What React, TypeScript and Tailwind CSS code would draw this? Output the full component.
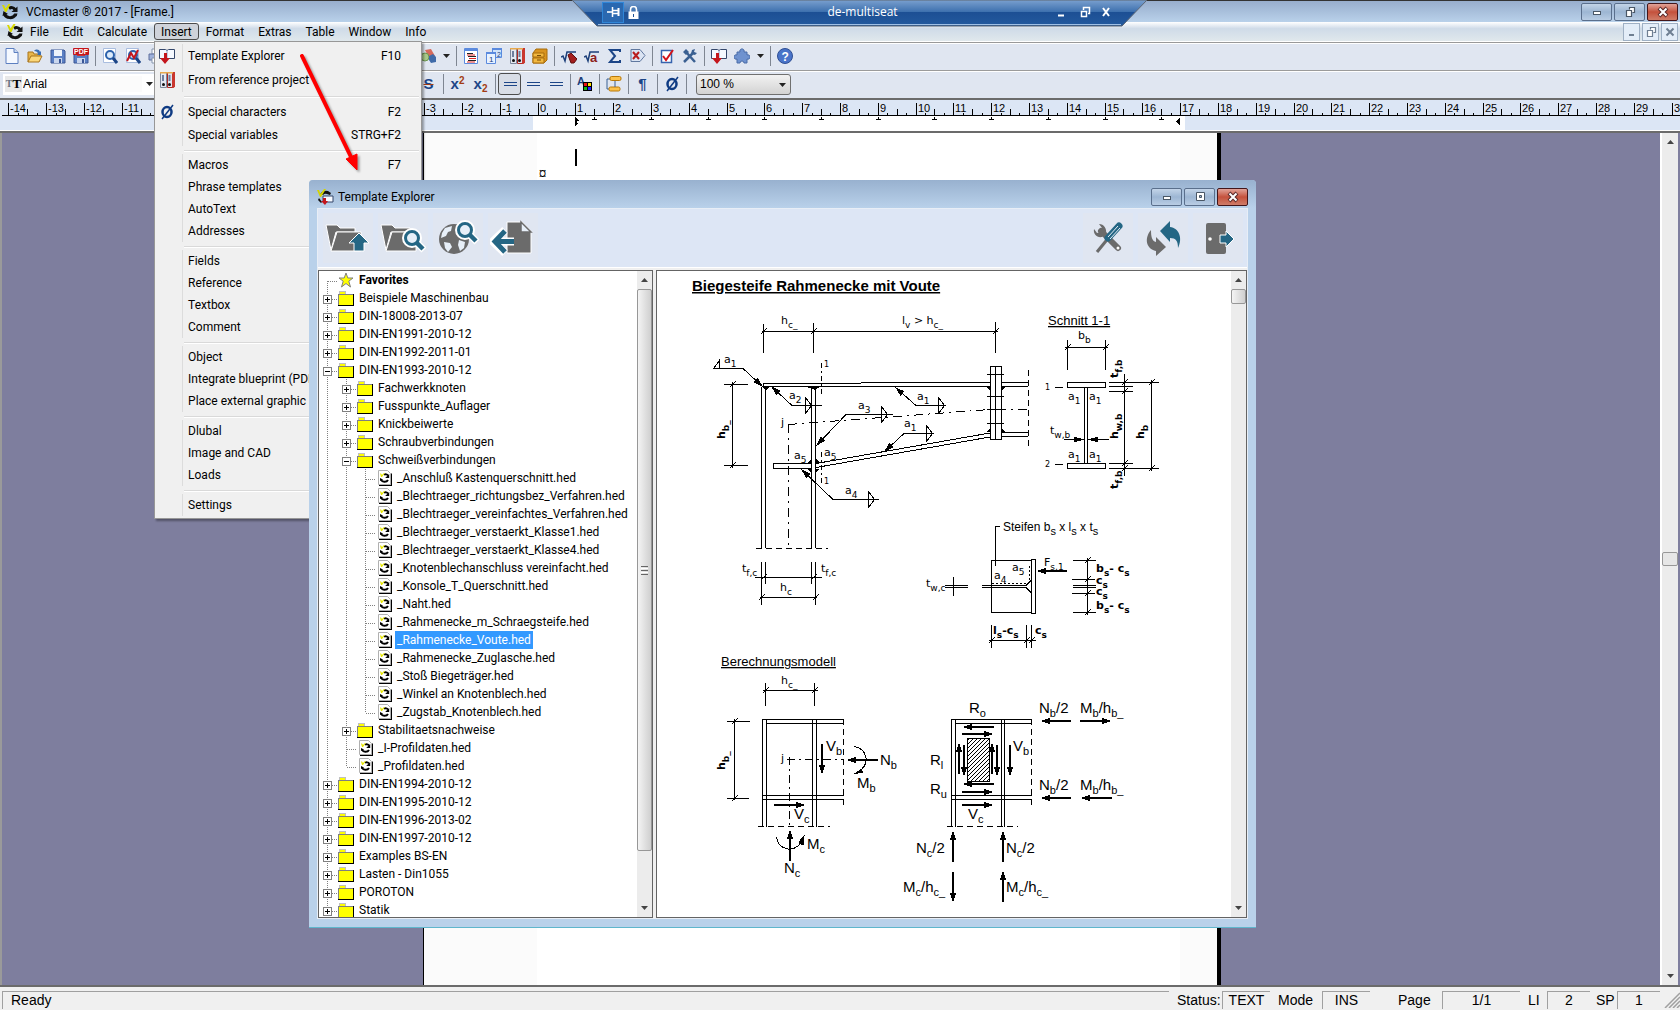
import React from 'react';

interface MenuEntry {
  label: string;
  keys?: string;
  icon?: React.ReactNode;
}

interface TreeRow {
  level: number;
  label: string;
  kind: 'star' | 'folder' | 'file';
  open?: boolean;
  last?: boolean;
  selected?: boolean;
}

/* ---------- small icons ---------- */

const Logo = () => (
  <svg width="16" height="16" viewBox="0 0 16 16" fill="none">
    <path d="M7 4.5c2-1.500 4.500-1 6 1" stroke="#111" strokeWidth="3" />
    <path d="M15.500 2.500v5.500h-6z" fill="#111" />
    <path d="M2.500 10c1.500 4.500 8.500 5 11 .5" stroke="#111" strokeWidth="3" />
    <path d="M.5 12l1-5 4.500 3zM12 9.500h3.500l-1 3z" fill="#111" />
    <path d="M0 1h2l1.500 3.500L6.500 0h2L4.500 8H3z" fill="#d8d800" />
  </svg>
);

const Glyph = ({ children }: { children: React.ReactNode }) => (
  <svg width="16" height="16" viewBox="0 0 16 16" fill="none">
    {children}
  </svg>
);

const NewIcon = () => (
  <Glyph>
    <path d="M2 .5h8l4 4v11H2z" fill="#f4f8ff" stroke="#5c7fc0" />
    <path d="M10 .5v4h4" fill="#c7d8f3" stroke="#5c7fc0" />
  </Glyph>
);

const OpenIcon = () => (
  <Glyph>
    <path d="M1 14V4h5l1 2h6v2" fill="#e8b64a" stroke="#a8741c" />
    <path d="M1 14l3-6h11l-3 6z" fill="#fbd77a" stroke="#a8741c" />
    <path d="M7 3c2-2 5-2 6 1l1-1v4h-4l1-1c0-2-2-3-4-3z" fill="#3b6fb5" />
  </Glyph>
);

const SaveIcon = ({ pdf }: { pdf?: boolean }) => (
  <Glyph>
    <path d="M1 2h13l1 1v12H1z" fill="#5a7fc4" stroke="#3a5696" />
    <path d="M4 2h8v6H4z" fill={pdf ? '#c33' : '#eef3fb'} />
    <path d="M4 10h8v5H4z" fill="#c9d6ee" />
    <path d="M9 11h2v4H9z" fill="#3a5696" />
    {pdf && <rect x="0" y="0" width="16" height="7" rx="1" fill="#c4161c" />}
    {pdf && (
      <text x="1" y="6" fontSize="7" fontWeight="bold" fill="#fff" fontFamily="Liberation Sans">
        PDF
      </text>
    )}
  </Glyph>
);

const PreviewIcon = ({ strike }: { strike?: boolean }) => (
  <Glyph>
    <path d="M1.5 .5h12v14h-12z" fill="#fff" stroke="#a9bddf" />
    <circle cx="8" cy="7" r="4" fill="#dcebfb" stroke="#2c62ac" strokeWidth="2" />
    <path d="M11 10l4 5" stroke="#1c4587" strokeWidth="3" />
    {strike && <path d="M2 13l4-8 3 5 4-8" stroke="#c4161c" strokeWidth="2" />}
  </Glyph>
);

const PrintIcon = () => (
  <Glyph>
    <path d="M4 1h8v5H4z" fill="#fff" stroke="#8796ad" />
    <path d="M1 6h14v6H1z" fill="#9fb2dc" stroke="#5f6f9c" />
    <path d="M4 10h8v5H4z" fill="#fff" stroke="#8796ad" />
  </Glyph>
);

const ShapesIcon = () => (
  <Glyph>
    <path d="M5 2l6-1 4 7-6 2z" fill="#d66a5c" />
    <circle cx="5" cy="9" r="4" fill="#a9c98a" stroke="#6d9650" />
    <path d="M9 8l4-2 3 3v5l-5 1-2-3z" fill="#3e6aa8" />
  </Glyph>
);

const ListIcon = () => (
  <Glyph>
    <path d="M1.5 .5h13v15h-13z" fill="#fff" stroke="#5b8ade" />
    <path d="M1 1h14v2H1z" fill="#5b8ade" />
    <path d="M4 5.5h6M5 8.5h8M5 12.5h8" stroke="#222" />
    <path d="M4 7h8M6 10.5h7M4 14h8" stroke="#d22" />
  </Glyph>
);

const PagesIcon = () => (
  <Glyph>
    <path d="M6.5 .5h9v9h-9z" fill="#cfe3fb" stroke="#5b8ade" />
    <path d="M.5 4.5h9v11h-9z" fill="#e8f2ff" stroke="#5b8ade" />
    <path d="M0 4h10v2H0zM6 0h10v2H6z" fill="#5b8ade" />
    <text x="3" y="14" fontSize="8" fill="#1c3f7a" fontFamily="Liberation Sans">1</text>
    <text x="11" y="9" fontSize="7" fill="#1c3f7a" fontFamily="Liberation Sans">2</text>
  </Glyph>
);

const BindersIcon = () => (
  <Glyph>
    <path d="M1.5 .5h6v15h-6z" fill="#e4e9f3" stroke="#7d889c" />
    <path d="M8.5 .5h6v15h-6z" fill="#dfe4ee" stroke="#b02a22" />
    <path d="M13 0h3v15l-3 1z" fill="#c9372e" />
    <path d="M1 0h13v1.5H1z" fill="#e8a94c" />
    <path d="M3 3h2v6H3zM9.500 3h2v6h-2z" fill="#6f7f9e" />
    <circle cx="4.5" cy="12.5" r="1.500" fill="#111" />
    <circle cx="10.5" cy="12.5" r="1.500" fill="#111" />
  </Glyph>
);

const BoxIcon = () => (
  <Glyph>
    <path d="M4 1h11v11l-3 3H1V5z" fill="#d99420" stroke="#a86d0c" />
    <path d="M1 5h11v4H1zM1 10h11v5H1z" fill="#f2b840" stroke="#a86d0c" />
    <path d="M5 7.5h4M5 12h4" stroke="#7a4d05" />
  </Glyph>
);

const RootIcon = ({ letter }: { letter?: boolean }) => (
  <Glyph>
    <path d="M0 9l2-1 2 5 2-9h9" stroke="#1c3f7a" strokeWidth="1.5" />
    {letter ? (
      <text x="6" y="14" fontSize="13" fontWeight="bold" fill="#8c1d1d" fontFamily="Liberation Sans">a</text>
    ) : (
      <path d="M7 7l3-2 6 6-3 4h-3z" fill="#a31e1e" stroke="#5f0e0e" />
    )}
  </Glyph>
);

const SigmaIcon = () => (
  <Glyph>
    <path d="M13 4V2H3l5 6-5 6h10v-2" stroke="#1c4587" strokeWidth="2" />
  </Glyph>
);

const DeleteBlockIcon = () => (
  <Glyph>
    <path d="M1 1.500h9l5 6-5 6H1z" fill="#dbe4f3" stroke="#60789f" />
    <path d="M3 4l6 7M9 4l-6 7" stroke="#b91c1c" strokeWidth="2" />
  </Glyph>
);

const CheckIcon = () => (
  <Glyph>
    <path d="M2.5 2.5h10v12h-10z" fill="#fff" stroke="#3763ae" strokeWidth="1.5" />
    <path d="M4 8l3 4 7-10" stroke="#d3121a" strokeWidth="2" />
  </Glyph>
);

const WrenchIcon = () => (
  <Glyph>
    <path d="M2 14L12 4M4 4l9 10" stroke="#3b6092" strokeWidth="2.5" />
    <path d="M1 4l3-3 3 3-3 3zM10 2l3-1-1 3 3 1-2 2-4-1z" fill="#3b6092" />
  </Glyph>
);

const BookArrowIcon = () => (
  <Glyph>
    <path d="M.5 1.5h6l1.5 1 1.5-1h6v9H.5z" fill="#f5f9ff" stroke="#34476b" />
    <path d="M8 2v8" stroke="#8ca0c4" />
    <path d="M5 5h3v5h3l-5 6-5-6h4z" fill="#c4161c" />
  </Glyph>
);

const PuzzleIcon = () => (
  <Glyph>
    <path d="M6 4a2.200 2.200 0 1 1 4 0h3v3a2.200 2.200 0 1 1 0 4v4h-3a2 2 0 1 0-4 0H3v-4a2.200 2.200 0 1 1 0-4V4z" fill="#6f92cf" stroke="#4a6ca8" />
  </Glyph>
);

const HelpIcon = () => (
  <Glyph>
    <circle cx="8" cy="8" r="7.5" fill="#4a74c9" stroke="#2f4f94" />
    <text x="4.5" y="12.5" fontSize="12" fontWeight="bold" fill="#fff" fontFamily="Liberation Sans">?</text>
  </Glyph>
);

const PaletteIcon = () => (
  <Glyph>
    <text x="0" y="9" fontSize="11" fontWeight="bold" fill="#1c3f7a" fontFamily="Liberation Sans">A</text>
    <path d="M6 6h9v9H6z" fill="#000" />
    <path d="M7 7h3v3H7z" fill="#e11" />
    <path d="M11 7h3v3h-3z" fill="#fd0" />
    <path d="M7 11h3v3H7z" fill="#1b1" />
    <path d="M11 11h3v3h-3z" fill="#22f" />
  </Glyph>
);

const BreakIcon = () => (
  <Glyph>
    <path d="M4 3H1v10h3" stroke="#3b6092" />
    <rect x="4" y=".5" width="11" height="4" rx="1.5" fill="#fbc14a" stroke="#b97908" />
    <rect x="3" y="11" width="11" height="4" rx="1.5" fill="#fbc14a" stroke="#b97908" />
    <path d="M9 5v6" stroke="#3b6092" />
  </Glyph>
);

const OIcon = () => (
  <Glyph>
    <ellipse cx="8" cy="8" rx="4.5" ry="5" stroke="#0f3b83" strokeWidth="2.5" />
    <path d="M3 15L14 1" stroke="#0f3b83" strokeWidth="1.5" />
  </Glyph>
);

const LinesIcon = () => (
  <Glyph>
    <path d="M1.5 6.5h13M1.5 9.5h13" stroke="#1c4587" shapeRendering="crispEdges" />
  </Glyph>
);

/* ---------- data ---------- */

const menuGroups: MenuEntry[][] = [
  [
    { label: 'Template Explorer', keys: 'F10', icon: <BookArrowIcon /> },
    { label: 'From reference project', icon: <BindersIcon /> },
  ],
  [
    { label: 'Special characters', keys: 'F2', icon: <OIcon /> },
    { label: 'Special variables', keys: 'STRG+F2' },
  ],
  [
    { label: 'Macros', keys: 'F7' },
    { label: 'Phrase templates' },
    { label: 'AutoText' },
    { label: 'Addresses' },
  ],
  [{ label: 'Fields' }, { label: 'Reference' }, { label: 'Textbox' }, { label: 'Comment' }],
  [{ label: 'Object' }, { label: 'Integrate blueprint (PDF)' }, { label: 'Place external graphic' }],
  [{ label: 'Dlubal' }, { label: 'Image and CAD' }, { label: 'Loads' }],
  [{ label: 'Settings' }],
];

const files = [
  '_Anschluß Kastenquerschnitt.hed',
  '_Blechtraeger_richtungsbez_Verfahren.hed',
  '_Blechtraeger_vereinfachtes_Verfahren.hed',
  '_Blechtraeger_verstaerkt_Klasse1.hed',
  '_Blechtraeger_verstaerkt_Klasse4.hed',
  '_Knotenblechanschluss vereinfacht.hed',
  '_Konsole_T_Querschnitt.hed',
  '_Naht.hed',
  '_Rahmenecke_m_Schraegsteife.hed',
  '_Rahmenecke_Voute.hed',
  '_Rahmenecke_Zuglasche.hed',
  '_Stoß Biegeträger.hed',
  '_Winkel an Knotenblech.hed',
  '_Zugstab_Knotenblech.hed',
];

const folder = (level: number, label: string, open = false): TreeRow => ({ level, label, kind: 'folder', open });

const treeRows: TreeRow[] = [
  { level: 0, label: 'Favorites', kind: 'star' },
  folder(0, 'Beispiele Maschinenbau'),
  folder(0, 'DIN-18008-2013-07'),
  folder(0, 'DIN-EN1991-2010-12'),
  folder(0, 'DIN-EN1992-2011-01'),
  folder(0, 'DIN-EN1993-2010-12', true),
  folder(1, 'Fachwerkknoten'),
  folder(1, 'Fusspunkte_Auflager'),
  folder(1, 'Knickbeiwerte'),
  folder(1, 'Schraubverbindungen'),
  folder(1, 'Schweißverbindungen', true),
  ...files.map((label, i): TreeRow => ({
    level: 2,
    label,
    kind: 'file',
    last: i === files.length - 1,
    selected: label === '_Rahmenecke_Voute.hed',
  })),
  folder(1, 'Stabilitaetsnachweise'),
  { level: 1, label: '_I-Profildaten.hed', kind: 'file' },
  { level: 1, label: '_Profildaten.hed', kind: 'file', last: true },
  folder(0, 'DIN-EN1994-2010-12'),
  folder(0, 'DIN-EN1995-2010-12'),
  folder(0, 'DIN-EN1996-2013-02'),
  folder(0, 'DIN-EN1997-2010-12'),
  folder(0, 'Examples BS-EN'),
  folder(0, 'Lasten - Din1055'),
  folder(0, 'POROTON'),
  folder(0, 'Statik'),
];

/* ---------- window chrome ---------- */

const WinButton = ({ kind, small }: { kind: 'min' | 'max' | 'restore' | 'close'; small?: boolean }) => {
  const close = kind === 'close' && !small;
  const look = small
    ? 'h-[18px] w-[17px] border-[#9fb0c4] bg-[#e3edf8]'
    : close
      ? 'h-[18px] w-[31px] rounded-[2px] border-[#43161a] bg-linear-to-b from-[#e0a298] via-[#c4513c] to-[#cf7c68]'
      : 'h-[18px] w-[31px] rounded-[2px] border-[#5a6f8c] bg-linear-to-b from-[#c3d4e8] via-[#9db6d3] to-[#b9cde4]';
  const stroke = small ? '#6f7f92' : '#4a5766';
  return (
    <button type="button" aria-label={kind} className={`flex items-center justify-center border ${look}`}>
      <svg width="12" height="12" viewBox="0 0 12 12" fill="none" stroke={stroke}>
        {kind === 'min' && !small && <rect x="2.5" y="5.5" width="7" height="3" fill="#fff" />}
        {kind === 'min' && small && <path d="M3 9h5" strokeWidth="2" />}
        {kind === 'max' && <path d="M2.5 1.5h8v8h-8zM5.5 4.5h2v2h-2z" fill="#fff" fillRule="evenodd" />}
        {kind === 'restore' && <path d="M5.5 3.5v-2h5v5h-2M2.5 4.5h5v6h-5z" fill="#fff" strokeWidth="1.2" />}
        {kind === 'close' && !small && <path d="M2 2l8 8M10 2l-8 8" stroke="#5a2a2a" strokeWidth="4" />}
        {kind === 'close' && <path d="M2.5 2.5l7 7M9.5 2.5l-7 7" stroke={small ? stroke : '#fff'} strokeWidth="2" />}
      </svg>
    </button>
  );
};

const ScrollArrow = ({ down }: { down?: boolean }) => (
  <button type="button" aria-label={down ? 'Scroll down' : 'Scroll up'} className="flex h-[18px] shrink-0 items-center justify-center">
    <svg width="7" height="4" viewBox="0 0 7 4">
      <path d={down ? 'M0 0h7L3.5 4z' : 'M0 4h7L3.5 0z'} fill="#444" />
    </svg>
  </button>
);

const RemoteBar = () => (
  <div className="absolute top-0 left-[572px] z-40 h-[27px] w-[575px]">
    <svg className="absolute inset-0" width="575" height="27" viewBox="0 0 575 27">
      <defs>
        <linearGradient id="remote" x1="0" y1="0" x2="0" y2="1">
          <stop offset="0" stopColor="#7aa0cf" />
          <stop offset=".46" stopColor="#3d70ae" />
          <stop offset=".47" stopColor="#1c4f94" />
          <stop offset="1" stopColor="#245a9e" />
        </linearGradient>
      </defs>
      <path d="M0 0h575l-25 26H25z" fill="url(#remote)" stroke="#5d6673" />
      <path d="M26 24.5h523" stroke="#9fc0e6" />
    </svg>
    <div className="relative flex h-6 items-center pr-[35px] pl-[30px] text-white">
      <button type="button" aria-label="Pin" className="flex h-[21px] w-[22px] items-center justify-center border border-[#2f86d8] bg-[#2a68b0]">
        <svg width="13" height="10" viewBox="0 0 13 10" fill="none" stroke="#fff">
          <path d="M0 5h5M5.5 0v10M6 3.5h5M6 6.5h5" strokeWidth="1.5" />
          <path d="M11.5 1v8" strokeWidth="2" />
        </svg>
      </button>
      <svg className="ml-1" width="11" height="13" viewBox="0 0 11 13">
        <path d="M2.5 6V3.5a3 3 0 0 1 6 0V6" fill="none" stroke="#fff" strokeWidth="1.6" />
        <path d="M.5 5.5h10V13H.5z" fill="#fff" />
        <path d="M5 8h1v3H5z" fill="#1c4f94" />
      </svg>
      <span className="flex-1 pl-[160px] text-center font-['Open_Sans',sans-serif] text-xs">de-multiseat</span>
      <svg className="ml-[130px]" width="56" height="13" viewBox="0 0 56 13" fill="none" stroke="#fff">
        <path d="M2 9.5h6" strokeWidth="2" />
        <path d="M27.5 4V1.5h6v6H32M25.5 5.5h5v5h-5z" strokeWidth="1.5" />
        <path d="M47 2l6 8M53 2l-6 8" strokeWidth="2" />
      </svg>
    </div>
  </div>
);

const Tool = ({ label, pressed, children }: { label: string; pressed?: boolean; children: React.ReactNode }) => (
  <button
    type="button"
    aria-label={label}
    className={`flex h-[22px] w-[23px] shrink-0 items-center justify-center ${pressed ? 'rounded-[3px] border border-[#4d4d4d] bg-[#d8dde6]' : ''}`}
  >
    {children}
  </button>
);

const Sep = () => (
  <div className="flex h-5 w-[6px] shrink-0 justify-center">
    <div className="w-px bg-[#7f8692]" />
  </div>
);

const DropArrow = () => (
  <button type="button" aria-label="More" className="flex w-[14px] shrink-0 justify-center">
    <svg width="7" height="4" viewBox="0 0 7 4">
      <path d="M0 0h7L3.5 4z" fill="#222" />
    </svg>
  </button>
);

const InsertMenu = () => (
  <div className="absolute top-[18px] left-0 z-20 w-[268px] border border-[#979797] bg-[#f0f0f0] py-[2px] shadow-[2px_2px_2px_rgba(0,0,0,0.35)]">
    {menuGroups.map((group, g) => (
      <div key={g} className={g ? 'relative pt-2' : ''}>
        {g > 0 && <div className="absolute top-1 right-[2px] left-[29px] h-[2px] border-b border-white bg-[#d9d9d9]" />}
        {group.map(item => (
          <button
            type="button"
            key={item.label}
            className={`flex w-full items-center text-left whitespace-nowrap ${item.icon ? 'h-6' : 'h-[22px]'}`}
          >
            <span className="flex w-[28px] shrink-0 justify-center self-stretch border-r border-[#dcdcdc] pt-1 pr-1">{item.icon}</span>
            <span className="flex-1 pl-[5px]">{item.label}</span>
            <span className="pr-5">{item.keys}</span>
          </button>
        ))}
      </div>
    ))}
  </div>
);

const menuNames = ['File', 'Edit', 'Calculate', 'Insert', 'Format', 'Extras', 'Table', 'Window', 'Info'];

const MenuBar = () => (
  <nav className="flex h-[19px] items-center bg-linear-to-b from-white via-[#cfdbe8] via-35% to-[#e0e8ec] pr-[2px] pl-[7px]">
    <Logo />
    <div className="flex flex-1 items-center">
      {menuNames.map(name => (
        <div key={name} className="relative">
          <button
            type="button"
            className={`h-[17px] px-[6px] leading-[14px] border ${name === 'Insert' ? 'rounded-[3px] border-[#4c4c4c] bg-[#cfd3da]' : 'border-transparent'}`}
          >
            {name}
          </button>
          {name === 'Insert' && <InsertMenu />}
        </div>
      ))}
    </div>
    <div className="flex gap-[2px]">
      <WinButton kind="min" small />
      <WinButton kind="restore" small />
      <WinButton kind="close" small />
    </div>
  </nav>
);

const MainToolbar = () => (
  <div className="flex h-[27px] items-center border-b border-[#9b9b9b] bg-[#e0e6f1] pb-[2px]">
    <Tool label="New"><NewIcon /></Tool>
    <Tool label="Open"><OpenIcon /></Tool>
    <Tool label="Save"><SaveIcon /></Tool>
    <Tool label="Save as PDF"><SaveIcon pdf /></Tool>
    <Sep />
    <Tool label="Preview"><PreviewIcon /></Tool>
    <Tool label="Calculation preview"><PreviewIcon strike /></Tool>
    <Tool label="Print"><PrintIcon /></Tool>
    <div className="w-[249px] shrink-0" />
    <Tool label="Shapes"><ShapesIcon /></Tool>
    <DropArrow />
    <Sep />
    <Tool label="Contents"><ListIcon /></Tool>
    <Tool label="Pages"><PagesIcon /></Tool>
    <Tool label="Reference projects"><BindersIcon /></Tool>
    <Tool label="Archive"><BoxIcon /></Tool>
    <Sep />
    <Tool label="Edit formula"><RootIcon /></Tool>
    <Tool label="Formula"><RootIcon letter /></Tool>
    <Tool label="Sum"><SigmaIcon /></Tool>
    <Tool label="Remove block"><DeleteBlockIcon /></Tool>
    <Sep />
    <Tool label="Check"><CheckIcon /></Tool>
    <Tool label="Options"><WrenchIcon /></Tool>
    <Sep />
    <Tool label="Template Explorer"><BookArrowIcon /></Tool>
    <Tool label="Add-ins"><PuzzleIcon /></Tool>
    <DropArrow />
    <Sep />
    <Tool label="Help"><HelpIcon /></Tool>
  </div>
);

const FormatToolbar = () => (
  <div className="flex h-[27px] items-center border-t border-white bg-[#e0e6f1] pb-[2px] font-['Liberation_Sans',sans-serif]">
    <label className="ml-[3px] flex h-[21px] w-[414px] shrink-0 items-center bg-white">
      <span className="ml-[2px] flex h-4 w-[17px] items-center justify-center bg-[#e8e8e8] font-['Liberation_Serif',serif] text-[13px] font-bold">
        <span className="text-[10px] text-gray-500">T</span>T
      </span>
      <input aria-label="Font" defaultValue="Arial" className="w-[120px] bg-[#fbfbfb] pl-px text-xs outline-none" />
      <svg className="ml-1" width="7" height="4" viewBox="0 0 7 4">
        <path d="M0 0h7L3.5 4z" fill="#222" />
      </svg>
    </label>
    <Tool label="Strikethrough">
      <span className="text-[15px] font-bold text-[#1c4587] line-through decoration-[#a33c14]">S</span>
    </Tool>
    <Sep />
    <Tool label="Superscript">
      <span className="text-[15px] font-bold text-[#1c4587]">x<sup className="text-[10px] text-[#a33c14]">2</sup></span>
    </Tool>
    <Tool label="Subscript">
      <span className="text-[15px] font-bold text-[#1c4587]">x<sub className="text-[10px] text-[#a33c14]">2</sub></span>
    </Tool>
    <Sep />
    <Tool label="Spacing 1" pressed><LinesIcon /></Tool>
    <Tool label="Spacing 1.5"><LinesIcon /></Tool>
    <Tool label="Spacing 2"><LinesIcon /></Tool>
    <Sep />
    <Tool label="Colour"><PaletteIcon /></Tool>
    <Sep />
    <Tool label="Page break"><BreakIcon /></Tool>
    <Sep />
    <Tool label="Paragraph marks">
      <span className="text-[15px] font-bold text-[#1c4587]">¶</span>
    </Tool>
    <Sep />
    <Tool label="Special characters"><OIcon /></Tool>
    <Sep />
    <div className="relative ml-[7px]">
      <select aria-label="Zoom" className="block h-[21px] w-[95px] appearance-none rounded-[3px] border border-[#707070] bg-linear-to-b from-[#f2f2f2] to-[#d3d3d3] pl-[3px] text-xs">
        <option>100 %</option>
      </select>
      <svg className="pointer-events-none absolute top-[9px] right-[5px]" width="7" height="4" viewBox="0 0 7 4">
        <path d="M0 0h7L3.5 4z" fill="#222" />
      </svg>
    </div>
  </div>
);

/* ---------- ruler ---------- */

const CM = 37.8;
const ORIGIN = 537.5;
const quarters = Array.from({ length: 180 }, (_, i) => i - 56);

const Ruler = () => (
  <div className="h-[35px] shrink-0 border-t-2 border-b-2 border-[#6b6b6b] bg-[#dce6f5]">
    <svg className="block" width="100%" height="31" shapeRendering="crispEdges">
      <rect x="533" y="16" width="652" height="14" fill="#fff" />
      <rect x="0" y="30" width="100%" height="1" fill="#fff" />
      <path d="M2 15.5H5000" stroke="#000" />
      {quarters.map(q => {
        const x = Math.round(ORIGIN + (q * CM) / 4);
        const size = q % 4 === 0 ? 12 : q % 2 === 0 ? 6 : 2;
        return <rect key={q} x={x} y={15 - size} width="1" height={size} />;
      })}
      {quarters
        .filter(q => q % 4 === 0)
        .map(q => (
          <text key={q} x={Math.round(ORIGIN + (q * CM) / 4) + 2} y="12" fontSize="11" fontFamily="Liberation Sans, sans-serif">
            {q / 4}
          </text>
        ))}
      {Array.from({ length: 11 }, (_, i) => {
        const x = Math.round(ORIGIN + (i + 1) * 1.5 * CM);
        return <path key={i} d={`M${x - 2} 19.5h5M${x + 0.5} 17v3`} stroke="#000" />;
      })}
      <path d="M575 17l4 4-4 1zM575 26v-4l4 1zM1180 17v9l-4-4z" />
    </svg>
  </div>
);

/* ---------- template tree ---------- */

const StarIcon = () => (
  <svg width="16" height="16" viewBox="0 0 16 16">
    <path d="M8 1l1.8 5H15l-4.2 3.2L12.5 15 8 11.5 3.5 15l1.7-5.800L1 6h5.200z" fill="#ffff00" stroke="#808080" />
  </svg>
);

const FolderIcon = () => (
  <svg width="16" height="16" viewBox="0 0 16 16" shapeRendering="crispEdges">
    <path d="M1 4V1h6v3" fill="#ffff00" stroke="#c0c0c0" />
    <rect x="0" y="4" width="16" height="12" fill="#000" />
    <rect x="0" y="4" width="15" height="11" fill="#808080" />
    <rect x="1" y="5" width="14" height="10" fill="#ffff00" />
  </svg>
);

const FileIcon = () => (
  <svg width="16" height="16" viewBox="0 0 16 16" fill="none">
    <path d="M3 15.5h12.5V3.5" stroke="#000" strokeWidth="1.5" />
    <path d="M2.5 .5h9l3 3v11h-12z" fill="#fff" stroke="#b0b0b0" />
    <path d="M8 4.800c1.500-1 3.200-.5 4 .8" stroke="#000" strokeWidth="1.800" />
    <path d="M13.200 4v4h-4z" fill="#000" />
    <path d="M5 9.500c1 2.800 5.500 3 7 .5" stroke="#000" strokeWidth="2" />
    <path d="M4 11V8l3 1.500z" fill="#000" />
    <path d="M4 3.500h1l1 1.500 2-2h1L6 7H5z" fill="#e6e600" />
  </svg>
);

// one 19px wide column of dotted guides, optionally with the +/- box on it
const Guide = ({ top, bottom, across, box }: { top?: boolean; bottom?: boolean; across?: boolean; box?: '+' | '-' }) => (
  <svg className="shrink-0" width="19" height="18" viewBox="0 0 19 18" fill="none" stroke="#808080" shapeRendering="crispEdges">
    {top && <path d="M8.5 0v10" strokeDasharray="1 1" />}
    {bottom && <path d="M8.5 10v8" strokeDasharray="1 1" />}
    {across && <path d="M9 10.5h10" strokeDasharray="1 1" />}
    {box && <rect x="4.5" y="6.5" width="8" height="8" fill="#fff" />}
    {box && <path d={box === '+' ? 'M6 10.5h5M8.5 8v5' : 'M6 10.5h5'} stroke="#000" />}
  </svg>
);

const Row = ({ row, first }: { row: TreeRow; first?: boolean }) => (
  <li className="flex h-[18px] items-center whitespace-nowrap">
    {Array.from({ length: row.level }, (_, i) => (
      <Guide key={i} top bottom />
    ))}
    <Guide top={!first} bottom={!row.last} across box={row.kind === 'folder' ? (row.open ? '-' : '+') : undefined} />
    <span className="w-[19px] shrink-0">
      {row.kind === 'star' && <StarIcon />}
      {row.kind === 'folder' && <FolderIcon />}
      {row.kind === 'file' && <FileIcon />}
    </span>
    <button
      type="button"
      className={`h-[18px] px-[2px] leading-[18px] ${row.selected ? 'bg-[#3399ff] text-white' : ''} ${row.kind === 'star' ? 'font-bold' : ''}`}
    >
      {row.label}
    </button>
  </li>
);

/* ---------- preview drawing ---------- */

// text with subscripts: even entries are normal, odd entries are lowered
const Sym = ({ x, y, t, size = 11, bold, up }: { x: number; y: number; t: string[]; size?: number; bold?: boolean; up?: boolean }) => (
  <text
    x={x}
    y={y}
    fontSize={size}
    fontWeight={bold ? 'bold' : 'normal'}
    fontFamily={size > 11 ? 'Liberation Sans, sans-serif' : 'DejaVu Sans, sans-serif'}
    transform={up ? `rotate(-90 ${x} ${y})` : undefined}
    stroke="none"
    fill="#000"
  >
    {t.map((part, i) => (
      <tspan key={i} dy={i === 0 ? 0 : i % 2 ? 4 : -4} fontSize={i % 2 ? (size > 11 ? 11 : 9) : size}>
        {part}
      </tspan>
    ))}
  </text>
);

const Arrow = ({ from, to, w = 2 }: { from: [number, number]; to: [number, number]; w?: number }) => {
  const [x1, y1] = from;
  const [x2, y2] = to;
  const len = Math.hypot(x2 - x1, y2 - y1);
  const ux = (x2 - x1) / len;
  const uy = (y2 - y1) / len;
  const bx = x2 - ux * 10;
  const by = y2 - uy * 10;
  return (
    <g>
      <path d={`M${x1} ${y1}L${bx} ${by}`} strokeWidth={w} />
      <path d={`M${x2} ${y2}L${bx - uy * 3} ${by + ux * 3}L${bx + uy * 3} ${by - ux * 3}z`} fill="#000" stroke="none" />
    </g>
  );
};

// leader line ending in the weld triangle
const Weld = ({ tip, knee, end, tri }: { tip: [number, number]; knee: [number, number]; end: number; tri: number }) => (
  <g>
    <Arrow from={knee} to={tip} w={1} />
    <path d={`M${knee[0]} ${knee[1]}H${end}M${tri} ${knee[1] - 8}v16l6-8z`} />
  </g>
);

const slashes = (points: number[][]) => points.map(([x, y]) => `M${x - 3} ${y + 3}l6-6`).join('');

const FrameCorner = () => (
  <g>
    <path d="M762 331.5H998M763.5 324v29M813.5 323v30M995.5 322v31" />
    <path d={slashes([[763.5, 331.5], [813.5, 331.5], [995.5, 331.5], [732.5, 384.5], [732.5, 465.5], [763.5, 577.5], [813.5, 577.5], [761.5, 597.5], [815.5, 597.5]])} />
    <Sym x={781} y={324} t={['h', 'c_']} />
    <Sym x={902} y={324} t={['l', 'v', ' > h', 'c_']} />

    <path d="M761.5 387v161M765.5 387v161M811.5 387v161M815.5 387v161" />
    <path d="M763.5 387v-3.5H861M861 382.5H990M763 386.5H990" />
    <path d="M990.5 366.5h11v73h-11zM995.5 367v72M987 374.5h17M987 396.5h17M987 409.5h17M987 423.5h17" />
    <path d="M1002 382.5h26M1002 386.5h26M1002 432.5h26M1002 436.5h26" />
    <path d="M1028.5 370v76" strokeDasharray="6 4" />
    <path d="M816 463.5L990 433M816 467.5L990 437M811 463.5H773.5v5H811" />
    <path d="M788.5 424v124M788 424.5L990 409.5H1028" strokeDasharray="9 5 2 5" />
    <path d="M756 548.5h72" strokeDasharray="6 4" />
    <path d="M821.5 363v32M821.5 452v32" strokeDasharray="5 3 2 3" />
    <path d="M762 387h8l-4 3zM807 387h13l-5 3zM807 463l4-3v3zM816 463v-4l4 4zM807 469h4v3zM816 469h4l-4 3zM986 387h4v3zM986 432h4v-3zM1002 387h4l-4 3zM1002 432h4l-4-3z" fill="#000" stroke="none" />

    <path d="M732.5 382v86M724 384.5h24M724 465.5h24" />
    <Sym x={725} y={439} t={['h', 'b_']} bold up />
    <path d="M713 368.5h30M714 368l5-7v7" />
    <Arrow from={[743, 368.5]} to={[763, 387]} w={1} />
    <Sym x={724} y={363} t={['a', '1']} />
    <Weld tip={[771, 386]} knee={[792, 405.5]} end={822} tri={805.5} />
    <Sym x={789} y={399} t={['a', '2']} />
    <Weld tip={[816, 446]} knee={[846, 414.5]} end={893} tri={881.5} />
    <Sym x={858} y={409} t={['a', '3']} />
    <Weld tip={[895, 387]} knee={[916, 405.5]} end={946} tri={938.5} />
    <Sym x={917} y={400} t={['a', '1']} />
    <Weld tip={[884, 452]} knee={[904, 433.5]} end={934} tri={926.5} />
    <Sym x={904} y={427} t={['a', '1']} />
    <Weld tip={[801, 469]} knee={[833, 499.5]} end={879} tri={868.5} />
    <Sym x={845} y={494} t={['a', '4']} />
    <Sym x={794} y={459} t={['a', '5']} />
    <Sym x={824} y={456} t={['a', '5']} />
    <Sym x={781} y={426} t={['j']} />
    <Sym x={824} y={367} t={['1']} size={8} />
    <Sym x={824} y={484} t={['1']} size={8} />

    <path d="M761.5 562v43M765.5 562v22M811.5 562v22M815.5 562v43M755 577.5h67M760 597.5h57" />
    <Sym x={742} y={572} t={['t', 'f,c']} />
    <Sym x={821} y={572} t={['t', 'f,c']} />
    <Sym x={780} y={591} t={['h', 'c']} />
  </g>
);

const Section = () => (
  <g>
    <text x="1048" y="325" fontSize="13" textDecoration="underline" stroke="none" fill="#000">Schnitt 1-1</text>
    <Sym x={1078} y={339} t={['b', 'b']} />
    <path d="M1065 347.5h43M1067.5 340v30M1105.5 340v30" />
    <path d={slashes([[1067.5, 347.5], [1105.5, 347.5], [1124.5, 382.5], [1124.5, 391.5], [1124.5, 463.5], [1124.5, 468.5], [1151.5, 382.5], [1151.5, 468.5]])} />
    <path d="M1067.5 382.5h38v5h-38zM1067.5 463.5h38v5h-38zM1084.5 388v75M1087.5 388v75" />
    <path d="M1055 387.5h8M1055 464.5h8" />
    <Sym x={1045} y={390} t={['1']} size={8} />
    <Sym x={1045} y={467} t={['2']} size={8} />
    <Sym x={1068} y={400} t={['a', '1']} />
    <Sym x={1089} y={400} t={['a', '1']} />
    <Sym x={1068} y={458} t={['a', '1']} />
    <Sym x={1089} y={458} t={['a', '1']} />
    <Sym x={1050} y={434} t={['t', 'w,b']} />
    <Arrow from={[1064, 439.5]} to={[1084, 439.5]} w={1} />
    <Arrow from={[1109, 439.5]} to={[1088, 439.5]} w={1} />
    <path d="M1109 382.5h50M1109 386.5h24M1109 391.5h24M1109 463.5h24M1109 468.5h50M1124.5 374v102M1151.5 380v91" />
    <Sym x={1118} y={378} t={['t', 'f,b']} bold up />
    <Sym x={1118} y={439} t={['h', 'w,b']} bold up />
    <Sym x={1144} y={439} t={['h', 'b']} bold up />
    <Sym x={1118} y={489} t={['t', 'f,b']} bold up />
  </g>
);

const Stiffener = () => (
  <g>
    <Sym x={1003} y={531} t={['Steifen b', 's', ' x l', 's', ' x t', 's']} size={12} />
    <path d="M1000 526.5h-4.5v39M991.5 560.5h40v52h-40zM1031.5 559.5h4v54h-4z" />
    <path d="M982 585.5h44l6-6M982 587.5h44l6 6M945 585.5h23M945 587.5h23M953.5 577v19" />
    <path d="M992 583.5h36M1029.5 566v14" strokeDasharray="2 2" />
    <Sym x={926} y={587} t={['t', 'w,c']} />
    <Sym x={994} y={579} t={['a', '4']} />
    <Sym x={1012} y={571} t={['a', '5']} />
    <Sym x={1044} y={566} t={['F', 's,1']} />
    <Arrow from={[1067, 571]} to={[1036, 571]} />
    <path d="M1073 560.5h23M1072 579.5h23M1073 585.5h23M1073 587.5h23M1072 593.5h23M1073 612.5h23M1087.5 558v57" />
    <path d={slashes([[1087.5, 560.5], [1087.5, 579.5], [1087.5, 593.5], [1087.5, 612.5], [991.5, 640.5], [1026.5, 640.5], [1031.5, 640.5]])} />
    <Sym x={1096} y={572} t={['b', 's', '-  c', 's']} bold />
    <Sym x={1096} y={584} t={['c', 's']} bold />
    <Sym x={1096} y={595} t={['c', 's']} bold />
    <Sym x={1096} y={609} t={['b', 's', '-  c', 's']} bold />
    <path d="M991.5 625v23M1026.5 625v23M1031.5 625v23M989 640.5h47" />
    <Sym x={993} y={634} t={['l', 's', '-c', 's']} bold />
    <Sym x={1035} y={634} t={['c', 's']} bold />
  </g>
);

const CalcModel = () => (
  <g>
    <text x="721" y="666" fontSize="13" textDecoration="underline" stroke="none" fill="#000">Berechnungsmodell</text>
    <Sym x={781} y={684} t={['h', 'c_']} />
    <path d="M763 690.5h55M765.5 683v23M814.5 683v23M734.5 719v81M727 721.5h23M727 798.5h22" />
    <path d={slashes([[765.5, 690.5], [814.5, 690.5], [734.5, 721.5], [734.5, 798.5]])} />
    <path d="M762 719.5h82M766 723.5h78M762 795.5h82M762 799.5h82M762.5 719v108M766.5 719v108M812.5 719v108M816.5 719v108" />
    <path d="M843.5 719v86M758 826.5h72" strokeDasharray="6 4" />
    <path d="M787 759.5h57M789.5 757v70" strokeDasharray="8 4 2 4" />
    <Sym x={781} y={762} t={['j']} />
    <Sym x={725} y={770} t={['h', 'b_']} bold up />
    <Arrow from={[822, 744]} to={[822, 775]} />
    <Sym x={826} y={751} t={['V', 'b']} size={15} />
    <Arrow from={[878, 760]} to={[846, 760]} />
    <Sym x={880} y={765} t={['N', 'b']} size={15} />
    <path d="M854 746.5a13 13 0 0 1 4 25" />
    <path d="M853 774l9-5 1 4z" fill="#000" stroke="none" />
    <Sym x={857} y={788} t={['M', 'b']} size={15} />
    <Arrow from={[774, 805]} to={[806, 805]} />
    <Sym x={794} y={819} t={['V', 'c']} size={15} />
    <Arrow from={[790, 861]} to={[790, 829]} />
    <path d="M776.5 837a13 13 0 0 0 24 6" />
    <path d="M804 836l-1 9-4-3z" fill="#000" />
    <Sym x={807} y={849} t={['M', 'c']} size={15} />
    <Sym x={784} y={873} t={['N', 'c']} size={15} />
  </g>
);

const PanelModel = () => (
  <g>
    <path d="M952 719.5h80M955 723.5h77M952 795.5h80M952 799.5h80M951.5 719v108M955.5 719v108M1001.5 719v108M1004.5 719v108" />
    <path d="M1031.5 719v86M947 826.5h71" strokeDasharray="6 4" />
    <rect x="967.5" y="738.5" width="22" height="43" fill="url(#hatch)" />
    <Arrow from={[994, 727]} to={[962, 727]} />
    <Arrow from={[962, 734]} to={[994, 734]} />
    <Arrow from={[994, 784]} to={[962, 784]} />
    <Arrow from={[962, 792]} to={[994, 792]} />
    <Arrow from={[962, 805]} to={[994, 805]} />
    <Arrow from={[959, 774]} to={[959, 742]} />
    <Arrow from={[964, 745]} to={[964, 777]} />
    <Arrow from={[992, 774]} to={[992, 742]} />
    <Arrow from={[997, 745]} to={[997, 777]} />
    <Arrow from={[1010, 745]} to={[1010, 777]} />
    <Sym x={969} y={713} t={['R', 'o']} size={15} />
    <Sym x={930} y={765} t={['R', 'l']} size={15} />
    <Sym x={930} y={794} t={['R', 'u']} size={15} />
    <Sym x={1013} y={751} t={['V', 'b']} size={15} />
    <Sym x={968} y={819} t={['V', 'c']} size={15} />
    <Sym x={1039} y={713} t={['N', 'b', '/2']} size={15} />
    <Sym x={1080} y={713} t={['M', 'b', '/h', 'b_']} size={15} />
    <Arrow from={[1071, 721]} to={[1040, 721]} />
    <Arrow from={[1080, 721]} to={[1112, 721]} />
    <Sym x={1039} y={790} t={['N', 'b', '/2']} size={15} />
    <Sym x={1080} y={790} t={['M', 'b', '/h', 'b_']} size={15} />
    <Arrow from={[1071, 798]} to={[1040, 798]} />
    <Arrow from={[1112, 798]} to={[1080, 798]} />
    <Sym x={916} y={853} t={['N', 'c', '/2']} size={15} />
    <Sym x={1006} y={853} t={['N', 'c', '/2']} size={15} />
    <Sym x={903} y={892} t={['M', 'c', '/h', 'c_']} size={15} />
    <Sym x={1006} y={892} t={['M', 'c', '/h', 'c_']} size={15} />
    <Arrow from={[953, 862]} to={[953, 830]} />
    <Arrow from={[1003, 862]} to={[1003, 830]} />
    <Arrow from={[953, 872]} to={[953, 903]} />
    <Arrow from={[1003, 902]} to={[1003, 870]} />
  </g>
);

const Drawing = () => (
  <svg
    width="574"
    height="646"
    viewBox="657 271 574 646"
    fill="none"
    stroke="#000"
    shapeRendering="crispEdges"
    fontFamily="Liberation Sans, sans-serif"
  >
    <defs>
      <pattern id="hatch" width="4" height="4" patternUnits="userSpaceOnUse">
        <path d="M0 4L4 0M-1 1l2-2M3 5l2-2" stroke="#000" />
      </pattern>
    </defs>
    <text x="692" y="291" fontSize="15" fontWeight="bold" textDecoration="underline" stroke="none" fill="#000">
      Biegesteife Rahmenecke mit Voute
    </text>
    <FrameCorner />
    <Section />
    <Stiffener />
    <CalcModel />
    <PanelModel />
  </svg>
);

/* ---------- template explorer window ---------- */

const GREY = '#6b6b6b';
const TEAL = '#246684';

const BigTool = ({ label, children }: { label: string; children: React.ReactNode }) => (
  <button type="button" aria-label={label} className="flex h-[50px] w-[50px] items-center justify-center bg-[#e0e6f1]">
    <svg width="46" height="36" viewBox="0 0 46 36" fill="none">
      {children}
    </svg>
  </button>
);

const BigFolder = () => (
  <g>
    <path d="M1 5h11l3 3h15v4H11L6 30z" fill={GREY} stroke="#fff" />
    <path d="M12 12h24v19H6z" fill={GREY} stroke="#fff" />
  </g>
);

const Lens = ({ x, y }: { x: number; y: number }) => (
  <g transform={`translate(${x} ${y})`}>
    <circle cx="8" cy="8" r="7" stroke="#fff" strokeWidth="6" />
    <path d="M13 13l7 7" stroke="#fff" strokeWidth="7" />
    <circle cx="8" cy="8" r="6.500" fill="#e7eff8" stroke={TEAL} strokeWidth="3" />
    <path d="M13 13l6 6" stroke={TEAL} strokeWidth="4.500" />
  </g>
);

const Explorer = () => (
  <section className="absolute top-[180px] left-[309px] z-30 flex h-[748px] w-[947px] flex-col rounded-t-[4px] border-b border-[#5fb6cc] bg-[#b9d1ea] px-2 pb-2">
    <header className="-mx-2 flex h-7 shrink-0 items-center rounded-t-[4px] bg-linear-to-b from-[#98b1cf] to-[#b9d1ea] px-2 pt-[5px]">
      <svg width="17" height="16" viewBox="0 0 17 16">
        <path d="M3 6a6 5 0 0 1 8-4l3 2-1 2-3-1a4 4 0 0 0-4 1zM2 9l3 4-1 1-3-3z" fill="#111" />
        <path d="M0 1h2l1.5 4L7 0h2L4 8H3z" fill="#d4d400" />
        <path d="M6 7h10v6H6z" fill="#f5f9ff" stroke="#34476b" />
        <path d="M6 9h3v3h2l-3 4-4-4h2z" fill="#c4161c" />
      </svg>
      <h2 className="flex-1 pl-1">Template Explorer</h2>
      <div className="flex gap-[2px]">
        <WinButton kind="min" />
        <WinButton kind="max" />
        <WinButton kind="close" />
      </div>
    </header>

    <div className="flex min-h-0 flex-1 flex-col border border-[#e8eef6] bg-[#f0f0f0]">
      <div className="flex h-[59px] shrink-0 items-center justify-between border-b border-white bg-[#dde6f5] pr-1 pl-[5px]">
        <div className="flex gap-[5px]">
          <BigTool label="Import folder">
            <BigFolder />
            <path d="M34 13l10 10h-5v8H29v-8h-5z" fill={TEAL} stroke="#fff" />
          </BigTool>
          <BigTool label="Search folder">
            <BigFolder />
            <Lens x={24} y={10} />
          </BigTool>
          <BigTool label="Search online">
            <circle cx="19" cy="19" r="15" fill={GREY} />
            <path d="M10 8l7-2-1 5-3 1-2 4-5 2 1-5zM9 22l6 1 2 4-4 5-3-4zM24 20l6 2-1 6-4 3-2-6z" fill="#e7eff8" />
            <Lens x={22} y={2} />
          </BigTool>
          <BigTool label="Back to document">
            <path d="M17 2h15l9 9v22H17z" fill={GREY} stroke="#fff" />
            <path d="M31 2v10h10z" fill="#e7eff8" stroke={GREY} strokeWidth="1.5" />
            <path d="M15 10L3 21.5 15 33M4 21.5h20" stroke="#fff" strokeWidth="8" />
            <path d="M15 11L5 21.5 15 32M5 21.5h19" stroke={TEAL} strokeWidth="5" />
          </BigTool>
        </div>
        <div className="flex gap-[5px]">
          <BigTool label="Settings">
            <path d="M16 11l17 17" stroke={GREY} strokeWidth="6" strokeLinecap="round" />
            <path d="M9 9c-1 5 3 9 8 8l4-4c1-4-2-9-7-9l3 4-1 4-4 1z" fill={GREY} />
            <circle cx="33" cy="28" r="1.500" fill="#fff" />
            <path d="M12 32l13-16" stroke={GREY} strokeWidth="3" />
            <path d="M23 18L34 6" stroke={TEAL} strokeWidth="7" strokeLinecap="round" />
            <path d="M23 17L33 6M25 19L35 8" stroke="#e7eff8" />
          </BigTool>
          <BigTool label="Refresh">
            <path d="M20 11l10-10v6c9 1 13 11 8 21 0-7-2-10-8-10v4z" fill={TEAL} />
            <path d="M26 27l-10 9v-5C6 29 4 18 11 10c0 7 1 11 5 12v-5z" fill={GREY} />
          </BigTool>
          <BigTool label="Exit">
            <rect x="11" y="3" width="20" height="31" rx="2" fill={GREY} />
            <circle cx="15" cy="19" r="1.800" fill="#fff" />
            <path d="M25 15h6v-4l8 8-8 8v-4h-6z" fill={TEAL} stroke="#fff" />
          </BigTool>
        </div>
      </div>

      <div className="mt-[2px] flex min-h-0 flex-1 gap-[3px]">
        <div className="flex w-[335px] shrink-0 border border-[#646464] bg-white">
          <ul className="min-w-0 flex-1 overflow-hidden">
            {treeRows.map((row, i) => (
              <Row key={row.label} row={row} first={i === 0} />
            ))}
          </ul>
          <div className="flex w-[15px] shrink-0 flex-col bg-[#ececec]">
            <ScrollArrow />
            <div className="flex flex-[563] flex-col items-center justify-center gap-px rounded-[2px] border border-[#979797] bg-linear-to-r from-[#f4f4f4] to-[#cfcfcf]">
              <div className="h-px w-[7px] bg-[#666]" />
              <div className="h-px w-[7px] bg-white" />
              <div className="h-px w-[7px] bg-[#666]" />
              <div className="h-px w-[7px] bg-white" />
              <div className="h-px w-[7px] bg-[#666]" />
            </div>
            <div className="flex-[48]" />
            <ScrollArrow down />
          </div>
        </div>
        <div className="flex min-w-0 flex-1 border border-[#646464] bg-white">
          <div className="min-w-0 flex-1 overflow-hidden">
            <Drawing />
          </div>
          <div className="flex w-[15px] shrink-0 flex-col bg-[#ececec]">
            <ScrollArrow />
            <div className="h-[15px] rounded-[2px] border border-[#979797] bg-linear-to-r from-[#f4f4f4] to-[#cfcfcf]" />
            <div className="flex-1" />
            <ScrollArrow down />
          </div>
        </div>
      </div>
    </div>
  </section>
);

/* ---------- status bar ---------- */

const Cell = ({ className, children }: { className: string; children: React.ReactNode }) => (
  <div className={`flex h-[18px] items-center border-t border-l border-[#a0a0a0] ${className}`}>{children}</div>
);

const StatusBar = () => (
  <footer className="flex h-[25px] shrink-0 items-center border-t-2 border-[#6b6b6b] bg-[#f0f0f0] pt-[2px] font-['Liberation_Sans',sans-serif] text-sm">
    <Cell className="ml-[2px] flex-1 pl-2">Ready</Cell>
    <span className="ml-2 w-[45px]">Status:</span>
    <Cell className="w-12 justify-center">TEXT</Cell>
    <span className="ml-2 w-11">Mode</span>
    <Cell className="w-12 justify-center">INS</Cell>
    <span className="ml-7 w-11">Page</span>
    <Cell className="w-[78px] justify-center">1/1</Cell>
    <span className="ml-2 w-[19px]">LI</span>
    <Cell className="w-[43px] justify-center">2</Cell>
    <span className="ml-[6px] w-[21px]">SP</span>
    <Cell className="w-[43px] justify-center">1</Cell>
    <svg className="ml-1" width="16" height="16" viewBox="0 0 16 16" stroke="#a0a0a0" strokeWidth="1.5">
      <path d="M1 16L16 1M5 16L16 5M9 16l7-7M13 16l3-3" />
    </svg>
  </footer>
);

const RedArrow = () => (
  <svg className="pointer-events-none absolute top-[48px] left-[294px] z-30 drop-shadow-[2px_2px_1px_rgba(0,0,0,0.35)]" width="72" height="128" viewBox="294 48 72 128">
    <path d="M302 56l50 103" stroke="#f00" strokeWidth="4" strokeLinecap="round" />
    <path d="M357 170l-11-11 11-5z" fill="#f00" stroke="#f00" />
  </svg>
);

export default function App() {
  return (
    <div className="relative flex h-screen min-h-[940px] flex-col overflow-hidden bg-[#e0e6f1] font-['Roboto','Noto_Sans',sans-serif] text-xs text-black">
      <header className="flex h-[22px] shrink-0 items-center border-t border-[#333] bg-linear-to-b from-[#98aecd] to-[#b9d1ea] pr-[2px] pl-[2px]">
        <Logo />
        <h1 className="flex-1 pl-2">VCmaster ® 2017 - [Frame.]</h1>
        <div className="flex gap-[2px]">
          <WinButton kind="min" />
          <WinButton kind="restore" />
          <WinButton kind="close" />
        </div>
      </header>
      <MenuBar />
      <div className="h-[3px] shrink-0 border-y border-white bg-[#999]" />
      <MainToolbar />
      <FormatToolbar />
      <Ruler />

      <main className="flex min-h-0 flex-1 border-l-2 border-[#9a9a9a] bg-[#7e7e9e]">
        <div className="ml-[421px] flex w-[798px] shrink-0 border-r-4 border-l border-black bg-[#fbfbfb] pr-[37px] pl-[113px]">
          <div className="flex-1 bg-white pt-4 pl-[38px]">
            <div className="h-[17px] w-[2px] bg-black" />
            <div className="-ml-[36px] text-[10px] leading-4">¤</div>
          </div>
        </div>
        <div className="flex-1" />
        <div className="mr-[2px] flex w-[18px] flex-col border-l-2 border-white bg-[#ececec]">
          <ScrollArrow />
          <div className="flex-[400]" />
          <div className="h-[14px] rounded-[2px] border border-[#979797] bg-[#e6e6e6]" />
          <div className="flex-[400]" />
          <ScrollArrow down />
        </div>
      </main>
      <StatusBar />

      <RemoteBar />
      <Explorer />
      <RedArrow />
    </div>
  );
}
